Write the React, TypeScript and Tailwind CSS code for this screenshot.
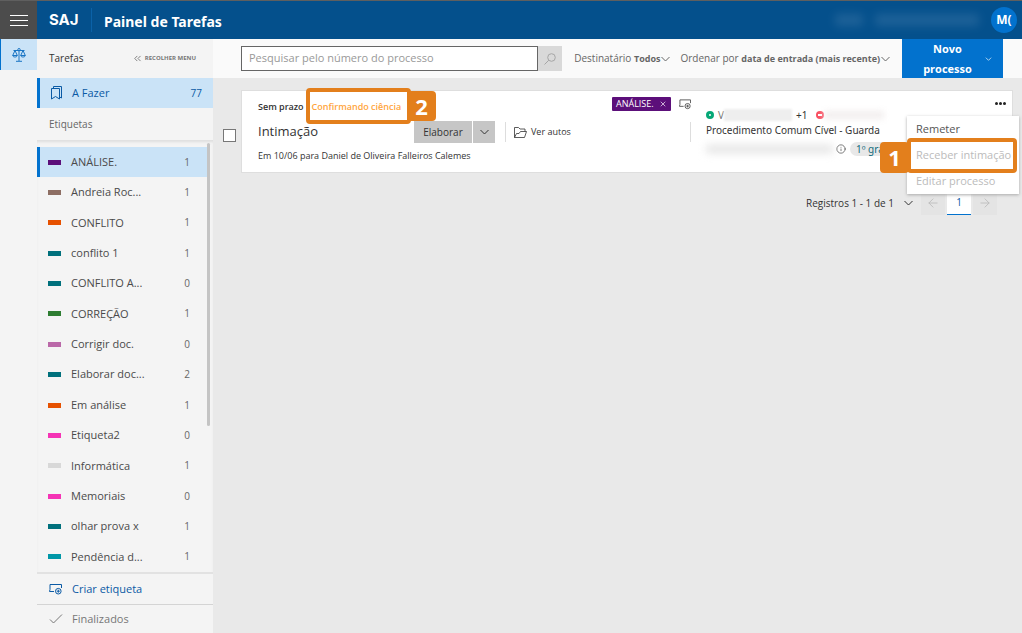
import React, { useState } from "react";
import { ChevronsLeft, X, ArrowLeft, ArrowRight, Info } from "lucide-react";

interface Tag {
  name: string;
  count: number;
  color: string;
}

interface IconProps {
  className?: string;
}

const TAGS: Tag[] = [
  { name: "ANÁLISE.", count: 1, color: "bg-[#5c0f7a]" },
  { name: "Andreia Roc...", count: 1, color: "bg-[#8d6e63]" },
  { name: "CONFLITO", count: 1, color: "bg-[#e65100]" },
  { name: "conflito 1", count: 1, color: "bg-[#00707c]" },
  { name: "CONFLITO A...", count: 0, color: "bg-[#00707c]" },
  { name: "CORREÇÃO", count: 1, color: "bg-[#2e7d32]" },
  { name: "Corrigir doc.", count: 0, color: "bg-[#ba68a8]" },
  { name: "Elaborar doc...", count: 2, color: "bg-[#00707c]" },
  { name: "Em análise", count: 1, color: "bg-[#e65100]" },
  { name: "Etiqueta2", count: 0, color: "bg-[#f533b5]" },
  { name: "Informática", count: 1, color: "bg-[#d8d8d8]" },
  { name: "Memoriais", count: 0, color: "bg-[#f533b5]" },
  { name: "olhar prova x", count: 1, color: "bg-[#00707c]" },
  { name: "Pendência d...", count: 1, color: "bg-[#0097a7]" },
];

function TagPlusIcon({ className }: IconProps) {
  return (
    <svg viewBox="0 0 13 11" fill="none" stroke="currentColor" className={className}>
      <path d="M5 7.5H.5L1 5.5V.5h11.5V4" />
      <circle cx="9.3" cy="7.2" r="2.8" />
      <path d="M9.3 5.7v3M7.8 7.2h3" />
    </svg>
  );
}

function Chevron({ className }: IconProps) {
  return (
    <svg viewBox="0 0 9 6" fill="none" stroke="currentColor" className={className}>
      <path d="M.5 1l4 4 4-4" />
    </svg>
  );
}

function ScaleIcon({ className }: IconProps) {
  return (
    <svg viewBox="0 0 14 14" fill="none" stroke="currentColor" className={className}>
      <path d="M7 2.5v10.5M4 13.3h6M1.5 2.5h11" />
      <circle cx="7" cy="1.7" r="1.2" />
      <path d="M3 2.5L.7 7.5h4.6zM11 2.5L8.700 7.500h4.600z" />
      <path d="M.7 7.500c.3 2 4.300 2 4.600 0M8.700 7.500c.3 2 4.300 2 4.600 0" />
    </svg>
  );
}

function BookmarksIcon({ className }: IconProps) {
  return (
    <svg viewBox="0 0 11 14" fill="none" stroke="currentColor" className={className}>
      <path d="M2.5 2V.5h8V12l-1.5-.8" />
      <path d="M.5 2.5h8V13l-4-2.500-4 2.500z" />
    </svg>
  );
}

function FolderIcon({ className }: IconProps) {
  return (
    <svg viewBox="0 0 13 11" fill="none" stroke="currentColor" strokeWidth="0.8" className={className}>
      <path d="M.5 10.500V.5h4L6 2h5v2.500M.5 10.500l2-4H5l1.500-2h6l-2 6z" />
    </svg>
  );
}

function Header() {
  return (
    <header className="flex h-[39px] items-stretch border-t border-[#5f5f5f] bg-[#04508c] text-white">
      <button type="button" aria-label="Menu" className="flex w-[37px] items-center justify-center bg-[#4c4c4c]">
        <svg viewBox="0 0 18 11" stroke="currentColor" className="h-[11px] w-[18px]">
          <path d="M0 .5h18M0 5.500h18M0 10.500h18" />
        </svg>
      </button>
      <div className="my-[7px] flex w-[55px] items-center border-r border-[#0b62a8] pl-3 font-[Inter] text-[15px] font-bold">SAJ</div>
      <h1 className="flex items-center pt-[2px] pl-3 font-['Noto_Sans',sans-serif] text-[14px] font-bold">Painel de Tarefas</h1>
      <div className="ml-auto flex items-center gap-3 pr-[5px]">
        <div className="flex gap-3 opacity-30 blur-[5px]">
          <span className="h-3 w-7 bg-[#5b8bb5]" />
          <span className="h-3 w-26 bg-[#5b8bb5]" />
        </div>
        <button type="button" className="h-[26px] w-[26px] rounded-full bg-[#0272ce] text-[12px] font-bold">M(</button>
      </div>
    </header>
  );
}

function Sidebar() {
  const [selected, setSelected] = useState("ANÁLISE.");

  return (
    <aside className="flex w-[176px] shrink-0 flex-col bg-[#f4f4f4] text-[11px] text-[#4a4a4a]">
      <div className="flex h-[39px] items-center justify-between pr-[17px] pl-3">
        <h2 className="text-[10px] font-medium text-[#333]">Tarefas</h2>
        <button type="button" className="flex items-center gap-[2px] text-[6px] font-bold text-[#777]">
          <ChevronsLeft className="h-[11px] w-[11px]" strokeWidth={2} />
          RECOLHER MENU
        </button>
      </div>
      <a href="#fazer" className="flex h-[30px] items-center border-l-3 border-[#0272ce] bg-[#cae3f7] pr-[11px] pl-[11px] text-[#0a5aa5]">
        <BookmarksIcon className="h-[14px] w-[11px]" />
        <span className="ml-[10px]">A Fazer</span>
        <span className="ml-auto text-[10px]">77</span>
      </a>
      <h3 className="flex h-8 items-center pl-3 text-[10px] text-[#666]">Etiquetas</h3>
      <div className="flex flex-1 border-b-2 border-[#e2e2e2] shadow-[inset_0_3px_3px_-1px_#dedede]">
        <div className="flex flex-1 flex-col justify-between pt-[7px]">
          {TAGS.map((tag) => (
            <button
              key={tag.name}
              type="button"
              onClick={() => setSelected(tag.name)}
              className={`flex h-[30px] items-center border-l-3 pr-[17px] pl-2 ${
                selected === tag.name ? "border-[#0272ce] bg-[#cae3f7]" : "border-transparent"
              }`}
            >
              <span className={`h-[5px] w-[13px] ${tag.color}`} />
              <span className="ml-[10px]">{tag.name}</span>
              <span className="ml-auto text-[10px] text-[#666]">{tag.count}</span>
            </button>
          ))}
        </div>
        <div className="mt-[3px] mr-[3px] h-[283px] w-[3px] rounded-sm bg-[#c4c4c4]" />
      </div>
      <button type="button" className="flex h-[31px] items-center border-b border-[#d4d4d4] pl-3 text-[#0a5aa5]">
        <TagPlusIcon className="mr-[10px] h-[11px] w-[13px]" />
        Criar etiqueta
      </button>
      <button type="button" className="flex h-7 items-center pl-3 text-[#777]">
        <svg viewBox="0 0 14 10" fill="none" stroke="currentColor" className="mr-[9px] h-[10px] w-[14px]">
          <path d="M1 5.500l3.500 3.500L13 .5" />
        </svg>
        Finalizados
      </button>
    </aside>
  );
}

function Toolbar() {
  return (
    <div className="flex h-[39px] items-center bg-[#fafafa] pr-[19px] pl-7 text-[10px] text-[#666]">
      <form className="flex h-[25px] flex-1">
        <input
          type="search"
          aria-label="Pesquisar"
          placeholder="Pesquisar pelo número do processo"
          className="min-w-0 flex-1 border border-[#666] bg-white px-[7px] text-[11px] outline-none placeholder:text-[#999]"
        />
        <button type="button" aria-label="Buscar" className="flex w-6 items-center justify-center bg-[#d9d9d9] text-[#a6a6a6]">
          <svg viewBox="0 0 12 12" fill="none" stroke="currentColor" className="h-3 w-3">
            <circle cx="7.5" cy="4.5" r="3.8" />
            <path d="M4.8 7.2L.5 11.5" />
          </svg>
        </button>
      </form>
      <button type="button" className="ml-3 flex items-center gap-px">
        <span>Destinatário <b className="text-[9px]">Todos</b></span>
        <Chevron className="h-[6px] w-[9px]" />
      </button>
      <button type="button" className="ml-[10px] flex items-center gap-px">
        <span>Ordenar por <b className="text-[9px]">data de entrada (mais recente)</b></span>
        <Chevron className="h-[6px] w-[9px]" />
      </button>
      <button type="button" className="ml-3 flex h-full w-[101px] items-center bg-[#0272ce] pr-[11px] pl-2 text-[11px] leading-5 font-bold text-white">
        <span className="flex-1">Novo<br />processo</span>
        <Chevron className="h-1 w-[7px]" />
      </button>
    </div>
  );
}

function TaskCard() {
  return (
    <article className="relative flex h-[83px] flex-1 border border-[#dedede] bg-white text-[9px] text-[#333]">
      <div className="flex flex-1 flex-col pt-2 pl-4">
        <div className="flex h-4 items-center gap-2">
          <b className="font-semibold">Sem prazo</b>
          <b className="font-semibold text-[#ffa53d]">Confirmando ciência</b>
        </div>
        <div className="mt-[5px] flex h-[24px] items-center">
          <h2 className="w-[156px] text-[13px] font-medium">Intimação</h2>
          <button type="button" className="h-[22px] w-[58px] bg-[#c6c6c6] text-[10px] font-medium">Elaborar</button>
          <button type="button" aria-label="Mais opções" className="ml-px flex h-[22px] w-[22px] items-center justify-center bg-[#c6c6c6]">
            <Chevron className="h-[6px] w-[9px]" />
          </button>
          <a href="#autos" className="ml-[10px] flex h-5 items-center gap-1 border-l border-[#ddd] pl-2">
            <FolderIcon className="h-[11px] w-[13px]" />
            Ver autos
          </a>
        </div>
        <p className="mt-1 leading-4">Em 10/06 para Daniel de Oliveira Falleiros Calemes</p>
      </div>
      <div className="flex w-[78px] items-start pt-[6px]">
        <span className="flex h-[14px] w-[59px] shrink-0 items-center justify-between rounded-[1px] bg-[#5c0f7a] px-1 text-[9px] text-white">
          ANÁLISE.
          <button type="button" aria-label="Remover etiqueta"><X className="h-2 w-2" /></button>
        </span>
        <TagPlusIcon className="mt-[2px] ml-2 h-[11px] w-[12px] shrink-0 text-[#555]" />
      </div>
      <div className="mt-[31px] h-5 w-px bg-[#ddd]" />
      <div className="w-[321px] pt-4 pl-[15px] font-['Noto_Sans',sans-serif] text-[10px]">
        <div className="flex h-4 items-center">
          <span className="h-2 w-2 rounded-full border-[3px] border-[#06a877] bg-white" />
          <span className="ml-1 text-[#777]">V</span>
          <span className="h-3 w-[68px] bg-[#eee] blur-[1px]" />
          <span className="ml-1">+1</span>
          <span className="ml-[9px] flex h-2 w-2 items-center justify-center rounded-full bg-[#f94f61]"><i className="h-[2px] w-1 bg-white" /></span>
          <span className="h-2 w-15 bg-[#f2eeee] blur-[3px]" />
        </div>
        <div className="leading-[14px]">Procedimento Comum Cível - Guarda</div>
        <div className="mt-1 flex h-4 items-center">
          <span className="h-2 w-[127px] bg-[#e4e4e4] blur-[4px]" />
          <Info className="ml-[3px] h-[10px] w-[10px]" strokeWidth={1.5} />
          <span className="ml-1 rounded-full bg-[#e8e8e8] px-[6px] leading-[14px] text-[#126b7c]">1º grau</span>
        </div>
      </div>
      <button type="button" aria-label="Ações" className="absolute top-2 right-[6px] flex h-2 items-center gap-px">
        <i className="h-[3px] w-[3px] rounded-full bg-[#222]" />
        <i className="h-[3px] w-[3px] rounded-full bg-[#222]" />
        <i className="h-[3px] w-[3px] rounded-full bg-[#222]" />
      </button>

      {/* Actions menu */}
      <div className="absolute top-[25px] -right-[7px] z-10 flex w-[112px] flex-col bg-white text-[11px] shadow-[0_1px_3px_#aaa]">
        <button type="button" className="h-[26px] pl-[9px] text-left text-[#555]">Remeter</button>
        <button type="button" disabled className="h-[26px] pl-[9px] text-left whitespace-nowrap text-[#bbb]">Receber intimação</button>
        <button type="button" disabled className="h-[26px] pl-[9px] text-left text-[#bbb]">Editar processo</button>
      </div>

      {/* Numbered steps */}
      <div className="absolute -top-[3px] left-[64px] h-9 w-[105px] rounded-sm border-4 border-[#e37f1c]" />
      <div className="absolute top-0 left-[165px] flex h-[30px] w-[29px] items-center justify-center rounded-sm bg-[#e37f1c] text-[22px] font-bold text-white">2</div>
      <div className="absolute top-[47px] -right-[5px] z-20 h-[35px] w-[110px] rounded-sm border-4 border-[#e37f1c]" />
      <div className="absolute top-[51px] right-[103px] z-20 flex h-[31px] w-[29px] items-center justify-center rounded-sm bg-[#e37f1c] text-[22px] font-bold text-white">1</div>
    </article>
  );
}

export default function App() {
  return (
    <div className="flex min-h-screen flex-col bg-[#e9e9e9] font-['Open_Sans',sans-serif]">
      <Header />
      <div className="flex flex-1">
        <nav className="w-[37px] shrink-0 bg-[#f4f4f4]">
          <a href="#tarefas" aria-label="Tarefas" className="flex h-[31px] items-center justify-center border-l border-[#0272ce] bg-[#cae3f7] text-[#1a75c4]">
            <ScaleIcon className="h-[14px] w-[14px]" />
          </a>
        </nav>
        <Sidebar />
        <main className="min-w-0 flex-1">
          <Toolbar />
          <div className="mt-3 flex items-center pr-[9px] pl-[10px]">
            <input type="checkbox" aria-label="Selecionar tarefa" className="mt-2 mr-[5px] h-[13px] w-[13px] appearance-none border border-[#777] bg-white" />
            <TaskCard />
          </div>
          <div className="mt-[18px] flex h-6 items-center justify-end pr-[25px] text-[10px] text-[#333]">
            Registros 1 - 1 de 1
            <button type="button" aria-label="Página" className="ml-[10px]"><Chevron className="h-[6px] w-[9px]" /></button>
            <button type="button" aria-label="Anterior" className="ml-2 flex h-6 w-6 items-center justify-center bg-[#e4e4e4] text-[#bbb]"><ArrowLeft className="h-[14px] w-[14px]" strokeWidth={1.5} /></button>
            <button type="button" className="mx-[2px] h-6 w-6 border-b border-[#0272ce] bg-white text-[#0a5aa5]">1</button>
            <button type="button" aria-label="Próxima" className="flex h-6 w-6 items-center justify-center bg-[#e4e4e4] text-[#bbb]"><ArrowRight className="h-[14px] w-[14px]" strokeWidth={1.5} /></button>
          </div>
        </main>
      </div>
    </div>
  );
}
